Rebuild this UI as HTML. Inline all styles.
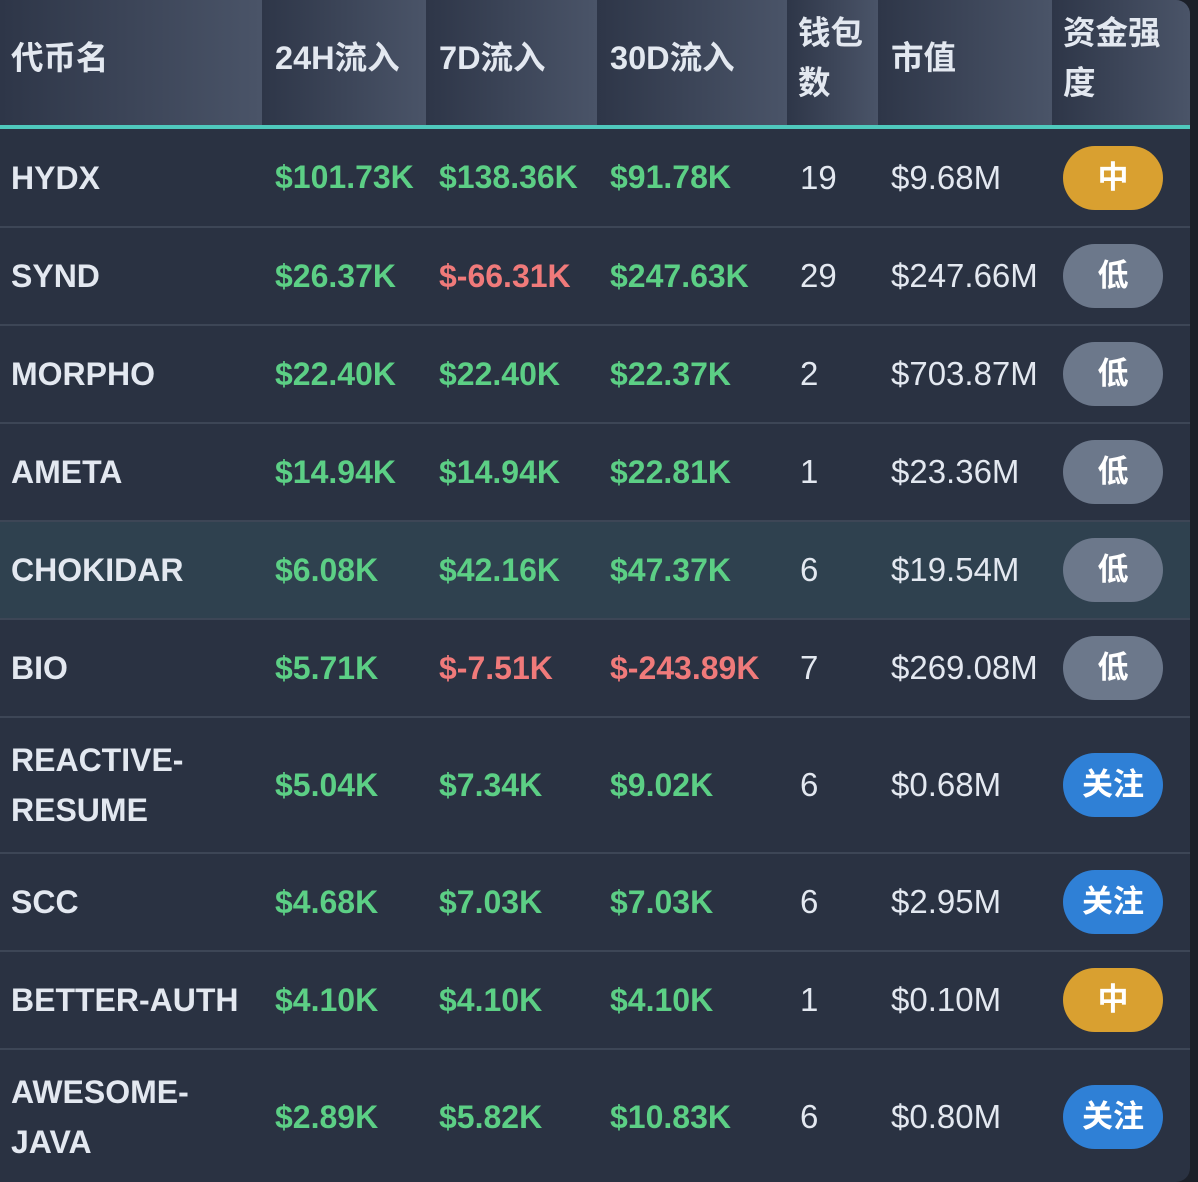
<!DOCTYPE html>
<html><head><meta charset="utf-8"><style>
html,body{margin:0;padding:0;background:#1c2029;width:1198px;height:1182px;overflow:hidden}
.wrap{position:absolute;left:0;top:0;width:1190px;height:1182px;background:#2a3242;border-radius:0 14px 14px 0;overflow:hidden}
table{border-collapse:collapse;table-layout:fixed;width:1190px;font-family:"Liberation Sans","Noto Sans CJK SC",sans-serif;font-size:32px;color:#e3e8f0}
th{height:115px;text-align:left;padding:0 0 10px 11px;font-weight:bold;background:linear-gradient(90deg,#2e3648,#4a5468);border-bottom:4px solid #4fc9bd;vertical-align:middle;line-height:50px;font-size:32.5px}
td{padding:0 0 0 11px;border-top:2px solid #3d4656;height:96px;white-space:nowrap}
tbody tr:first-child td{border-top:none;height:97px}
td.n{font-weight:bold;white-space:normal;line-height:50px}
td.g{color:#5ccf85;font-weight:bold;padding-left:13px}
td.r{color:#f07a7a;font-weight:bold;padding-left:13px}
td.m{font-size:33px;padding-left:13px}
tr.tall td{height:134px}
tr.hl td{background:#2f414f}
.b{display:inline-block;width:100px;height:64px;border-radius:32px;text-align:center;line-height:64px;font-weight:bold;color:#fff;font-size:31px}
.y{background:#d9a030}.s{background:#6c788b}.u{background:#2f80d6}
</style></head><body><div class="wrap">
<table>
<colgroup><col style="width:262px"><col style="width:164px"><col style="width:171px"><col style="width:190px"><col style="width:91px"><col style="width:174px"><col style="width:138px"></colgroup>
<thead><tr><th>代币名</th><th style="padding-left:13px">24H流入</th><th style="padding-left:13px">7D流入</th><th style="padding-left:13px">30D流入</th><th>钱包<br>数</th><th style="padding-left:13px">市值</th><th>资金强<br>度</th></tr></thead>
<tbody>
<tr><td class="n">HYDX</td><td class="g">$101.73K</td><td class="g">$138.36K</td><td class="g">$91.78K</td><td class="m">19</td><td class="m">$9.68M</td><td><span class="b y">中</span></td></tr>
<tr><td class="n">SYND</td><td class="g">$26.37K</td><td class="r">$-66.31K</td><td class="g">$247.63K</td><td class="m">29</td><td class="m">$247.66M</td><td><span class="b s">低</span></td></tr>
<tr><td class="n">MORPHO</td><td class="g">$22.40K</td><td class="g">$22.40K</td><td class="g">$22.37K</td><td class="m">2</td><td class="m">$703.87M</td><td><span class="b s">低</span></td></tr>
<tr><td class="n">AMETA</td><td class="g">$14.94K</td><td class="g">$14.94K</td><td class="g">$22.81K</td><td class="m">1</td><td class="m">$23.36M</td><td><span class="b s">低</span></td></tr>
<tr class="hl"><td class="n">CHOKIDAR</td><td class="g">$6.08K</td><td class="g">$42.16K</td><td class="g">$47.37K</td><td class="m">6</td><td class="m">$19.54M</td><td><span class="b s">低</span></td></tr>
<tr><td class="n">BIO</td><td class="g">$5.71K</td><td class="r">$-7.51K</td><td class="r">$-243.89K</td><td class="m">7</td><td class="m">$269.08M</td><td><span class="b s">低</span></td></tr>
<tr class="tall"><td class="n">REACTIVE-<br>RESUME</td><td class="g">$5.04K</td><td class="g">$7.34K</td><td class="g">$9.02K</td><td class="m">6</td><td class="m">$0.68M</td><td><span class="b u">关注</span></td></tr>
<tr><td class="n">SCC</td><td class="g">$4.68K</td><td class="g">$7.03K</td><td class="g">$7.03K</td><td class="m">6</td><td class="m">$2.95M</td><td><span class="b u">关注</span></td></tr>
<tr><td class="n">BETTER-AUTH</td><td class="g">$4.10K</td><td class="g">$4.10K</td><td class="g">$4.10K</td><td class="m">1</td><td class="m">$0.10M</td><td><span class="b y">中</span></td></tr>
<tr class="tall"><td class="n">AWESOME-<br>JAVA</td><td class="g">$2.89K</td><td class="g">$5.82K</td><td class="g">$10.83K</td><td class="m">6</td><td class="m">$0.80M</td><td><span class="b u">关注</span></td></tr>
</tbody></table></div></body></html>
